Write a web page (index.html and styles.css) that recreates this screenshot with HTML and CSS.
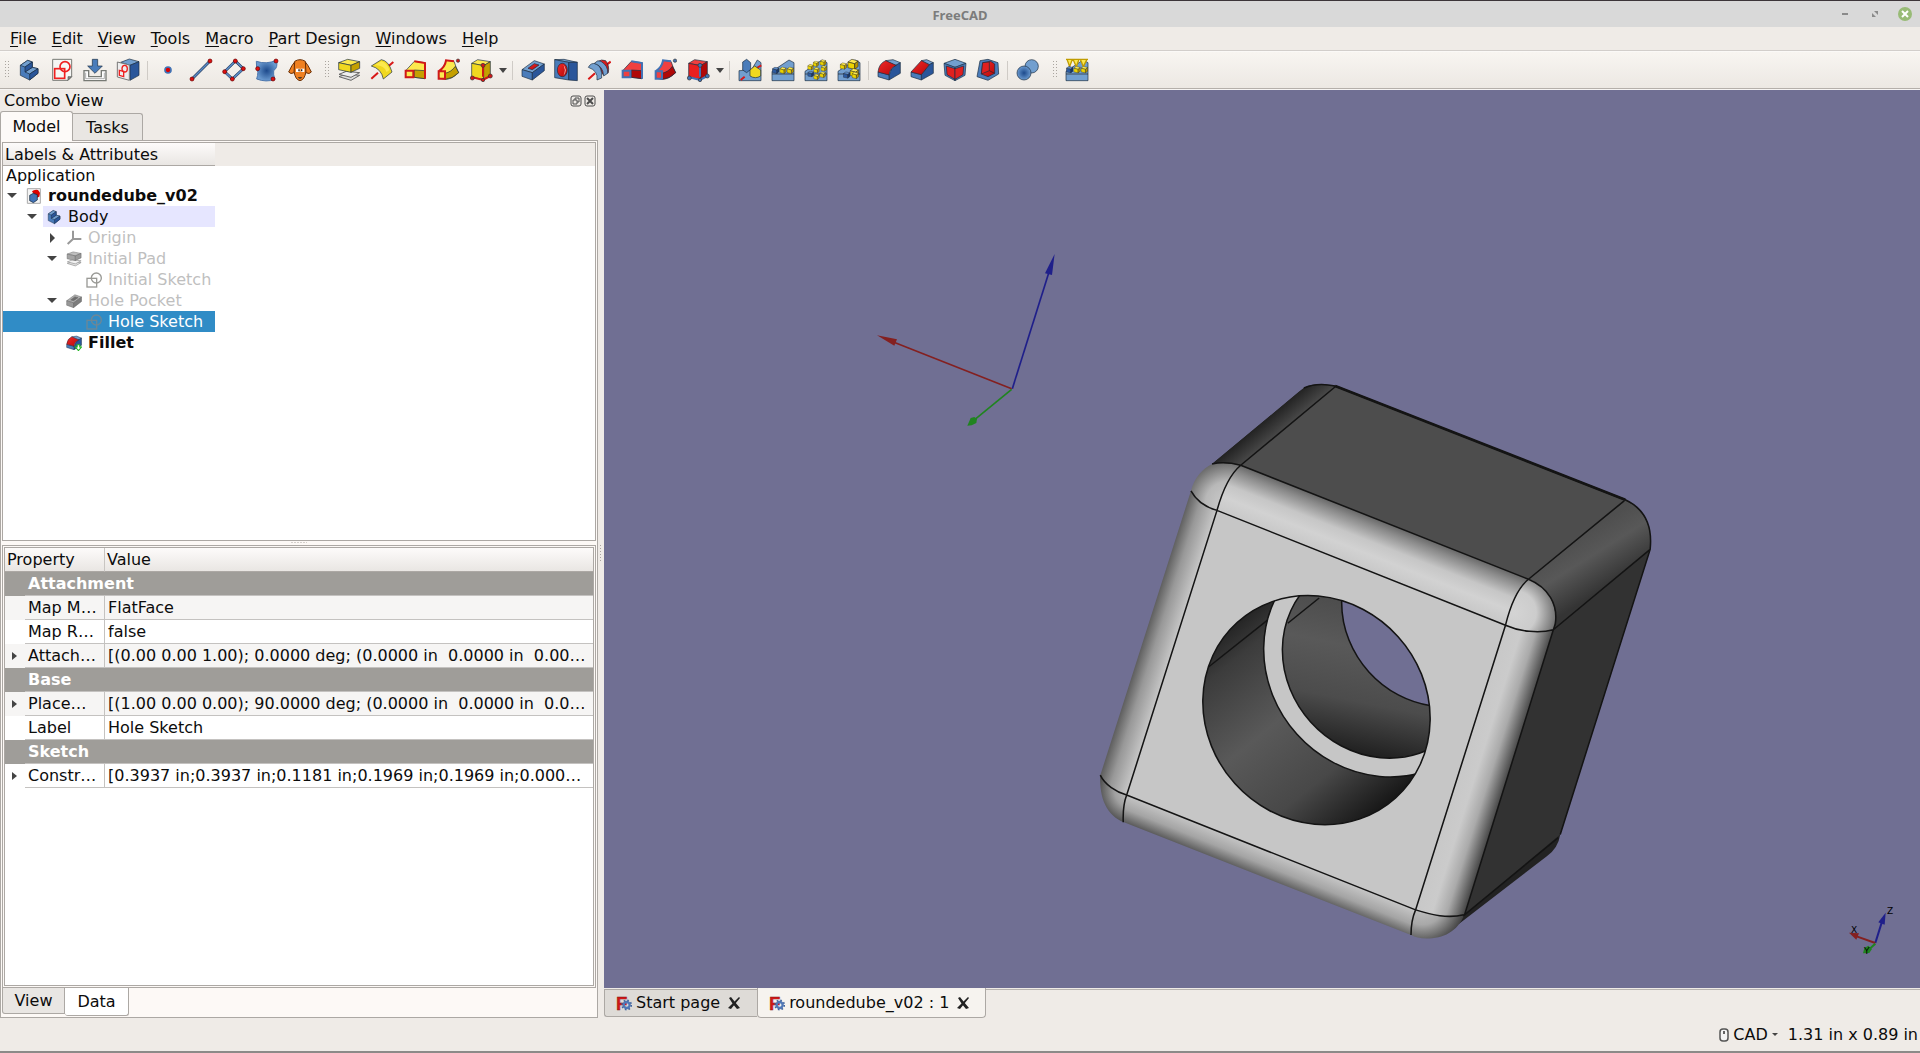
FILE: index.html
```html
<!DOCTYPE html>
<html lang="en">
<head>
<meta charset="utf-8">
<title>FreeCAD</title>
<link rel="stylesheet" href="styles.css">
</head>
<body>
<svg class="defs" aria-hidden="true">
  <defs>
    <linearGradient id="gBlue" x1="0" y1="0" x2="1" y2="1"><stop offset="0" stop-color="#729fcf"/><stop offset="1" stop-color="#204a87"/></linearGradient>
    <radialGradient id="gBall"><stop offset="0" stop-color="#1d4a8c"/><stop offset="1" stop-color="#6a9ad0"/></radialGradient>
    <linearGradient id="gRed" x1="0" y1="0" x2="1" y2="1"><stop offset="0" stop-color="#ef2929"/><stop offset="1" stop-color="#b80808"/></linearGradient>

    <symbol id="cube" viewBox="0 0 20 20">
      <path class="top" d="M1 6 8 1 19 4 13 9Z"/><path class="front" d="M1 6 13 9 13 19 1 16Z"/><path class="side" d="M13 9 19 4 19 14 13 19Z"/>
    </symbol>

    <symbol id="body" viewBox="0 0 72 72"><g class="ink">
      <path class="b2" d="M10 22 32 7 46 12 46 28 63 32 63 46 38 66 10 52Z"/>
      <path class="b1" d="M10 22 32 7 46 12 24 27Z"/><path class="b1" d="M24 42 46 28 63 32 38 48Z"/>
      <path class="b3" d="M38 48 63 32 63 46 38 66Z"/><path class="b3" d="M24 27 46 12 46 28 24 42Z"/></g>
    </symbol>
    <symbol id="sketch" viewBox="0 0 72 72">
      <path d="M8 4H65V56L54 67H8Z" fill="#f6f6f4" stroke="#777a75" stroke-width="3"/><path d="M65 56H54V67Z" fill="#888a85" stroke="#555" stroke-width="2"/>
      <g class="redline"><rect x="14" y="32" width="30" height="29"/><circle cx="45" cy="26" r="15"/></g>
    </symbol>
    <symbol id="import" viewBox="0 0 72 72">
      <path d="M3 38H17V56H55V38H69V68H3Z" fill="#fff" stroke="#777a75" stroke-width="4"/><path d="M8 44V62H64V44" fill="none" stroke="#888" stroke-width="2"/>
      <path class="b2 ink" d="M28 4H44V24H58L36 46 14 24H28Z"/>
    </symbol>
    <symbol id="facesketch" viewBox="0 0 72 72">
      <g class="ink"><path class="b1" d="M14 13 40 3 69 11 42 22Z"/><path class="b3" d="M42 22 69 11 69 52 42 67Z"/></g>
      <path d="M4 12 40 21 40 67 4 57Z" fill="#eee" stroke="#777" stroke-width="3"/>
      <g class="redline thin"><path d="M10 37 23 40 23 56 10 52Z"/><ellipse cx="26" cy="32" rx="8" ry="10"/></g>
    </symbol>
    <symbol id="point" viewBox="0 0 72 72"><circle cx="36" cy="36" r="9" fill="#d00" stroke="#4272b4" stroke-width="5"/></symbol>
    <symbol id="line" viewBox="0 0 72 72"><path class="wire" d="M9 63 63 9"/><path class="wirein" d="M9 63 63 9"/><g class="dot"><circle cx="9" cy="63" r="6"/><circle cx="63" cy="9" r="6"/></g></symbol>
    <symbol id="plane" viewBox="0 0 72 72"><path class="wire" d="M40 9 64 32 31 63 8 41Z"/><path class="wirein" d="M40 9 64 32 31 63 8 41Z"/><g class="dot"><circle cx="40" cy="9" r="6"/><circle cx="64" cy="32" r="6"/><circle cx="31" cy="63" r="6"/><circle cx="8" cy="41" r="6"/></g></symbol>
    <symbol id="binder" viewBox="0 0 72 72"><path d="M4 10Q34 20 64 7Q70 28 56 38Q54 50 60 64Q34 74 5 63Q12 40 5 32Z" fill="url(#gBall)" stroke="#4e77ad" stroke-width="3"/><g class="dot"><circle cx="63" cy="9" r="6"/><circle cx="8" cy="32" r="6"/><circle cx="54" cy="63" r="6"/></g></symbol>
    <symbol id="clone" viewBox="0 0 72 72"><g stroke="#6d3208" stroke-width="3" fill="#f08020"><path d="M20 10Q36 0 52 10Q56 24 54 40Q50 66 36 68Q22 66 18 40Q16 24 20 10Z"/><path d="M20 12Q12 20 2 42Q8 50 18 44Z"/><path d="M52 12Q60 20 70 42Q64 50 54 44Z"/></g><rect x="24" y="32" width="11" height="10" fill="#fff"/><rect x="38" y="32" width="11" height="10" fill="#fff"/><path d="M31 34h4v6h-4zM39 34h4v6h-4zM29 58q7 8 14 0z" fill="#222"/></symbol>

    <symbol id="pad" viewBox="0 0 72 72"><path d="M6 56 28 48 68 52 42 67Z" fill="#ddd" stroke="#666" stroke-width="3"/><path d="M6 49 28 40 68 44 42 58Z" fill="#eee" stroke="#666" stroke-width="3"/><g class="ink"><path class="m1" d="M5 14 32 4 68 11 42 22Z"/><path class="m2" d="M5 14 42 22 42 43 5 35Z"/><path class="m3" d="M42 22 68 11 68 31 42 43Z"/></g></symbol>
    <symbol id="revolution" viewBox="0 0 72 72"><path class="axis" d="M4 62 24 44M56 24 70 12"/><path class="ink m2" d="M4 24 34 5Q56 8 66 42L40 63Q34 32 4 24Z"/><path class="m1" d="M14 22 34 10Q50 14 58 36L50 42Q42 20 14 22Z"/></symbol>
    <symbol id="loft" viewBox="0 0 72 72"><path class="m1 ink" d="M8 38 34 10 66 14 66 62 34 58 8 58Z"/><path class="m3 ink" d="M34 36 66 38 66 62 34 58Z"/><path class="edge" d="M34 10 66 15 66 62"/><path class="edge" d="M8 38H31V58H8Z"/></symbol>
    <symbol id="pipe" viewBox="0 0 72 72"><path class="m1 ink" d="M8 40Q26 28 30 7L54 10Q60 28 68 44Q46 66 24 64L8 60Z"/><path class="m3 ink" d="M27 46Q46 42 58 25L68 44Q50 62 27 64Z"/><path class="edge" d="M8 40H27V62H8ZM8 40Q28 26 30 7L54 10"/><circle class="edot" cx="66" cy="8" r="5"/></symbol>
    <symbol id="prim" viewBox="0 0 72 72"><g class="ink"><path class="m1" d="M8 16 26 5 64 11 44 23Z"/><path class="m2" d="M8 16 44 23 44 64 8 58Z"/><path class="m3" d="M44 23 64 11 64 52 44 64Z"/></g><path class="edge" d="M42 22V56M10 58 42 66 64 54"/><g class="edot"><circle cx="42" cy="22" r="6"/><circle cx="10" cy="60" r="6"/><circle cx="42" cy="66" r="5"/><circle cx="64" cy="54" r="6"/></g></symbol>
    <symbol id="pocket" viewBox="0 0 72 72"><g class="ink"><path class="b1" d="M3 35 40 8 70 18 34 44Z"/><path class="b2" d="M3 35 34 44 34 66 3 55Z"/><path class="b3" d="M34 44 70 18 70 38 34 66Z"/><path class="r1" d="M21 31 40 17 54 21 34 35Z"/></g></symbol>
    <symbol id="hole" viewBox="0 0 72 72"><g class="ink"><path class="b1" d="M2 5 44 13 70 13 30 4Z"/><path class="b2" d="M2 5 44 13 44 66 2 59Z"/><path class="b3" d="M44 13 70 13 70 68 44 66Z"/><ellipse class="r1" cx="25" cy="36" rx="15" ry="20"/></g><path d="M28 20Q42 36 28 54Q38 36 28 20" fill="#fff"/></symbol>
    <symbol id="groove" viewBox="0 0 72 72"><path class="axis" d="M4 64 24 46M56 22 71 11"/><path class="ink r1" d="M30 12Q44 2 56 8Q68 22 64 44L48 50Z"/><path class="ink b1" d="M4 28Q12 12 28 18Q46 26 44 60L30 66Q34 38 4 28Z"/><path class="ink b1" d="M22 16Q32 4 42 10Q64 24 62 46L50 54Q48 24 22 16Z"/></symbol>

    <symbol id="base" viewBox="0 0 72 72"><path class="ink b1" d="M3 40 54 6 69 14 69 68 3 68Z"/><path class="inkline" d="M3 48 69 48"/></symbol>
    <symbol id="mirrored" viewBox="0 0 72 72"><path class="ink b1" d="M3 38 40 36 58 6 69 14V68H3Z"/><path class="axis" d="M8 66 20 56M56 30 70 22"/><path class="ink b2" d="M14 12 26 4 38 14V34L26 44 14 36Z"/><path class="ink m2" d="M36 36 50 24 68 36V54Q52 64 36 54Z"/></symbol>
    <symbol id="linear" viewBox="0 0 72 72"><use href="#base"/><use class="cb" href="#cube" x="3" y="26" width="22" height="22"/><use class="cy" href="#cube" x="25" y="26" width="22" height="22"/><use class="cy" href="#cube" x="47" y="26" width="22" height="22"/></symbol>
    <symbol id="polar" viewBox="0 0 72 72"><use href="#base"/><g class="cy"><use href="#cube" x="26" y="8" width="19" height="19"/><use href="#cube" x="47" y="4" width="20" height="20"/><use href="#cube" x="10" y="18" width="19" height="19"/><use href="#cube" x="50" y="22" width="19" height="19"/><use href="#cube" x="28" y="27" width="19" height="19"/><use href="#cube" x="46" y="40" width="20" height="20"/><use href="#cube" x="28" y="47" width="19" height="19"/></g><use class="cb" href="#cube" x="10" y="38" width="20" height="20"/></symbol>
    <symbol id="multi" viewBox="0 0 72 72"><use href="#base"/><g class="cy"><use href="#cube" x="30" y="2" width="36" height="34"/><use href="#cube" x="8" y="13" width="22" height="22"/><use href="#cube" x="36" y="30" width="32" height="28"/><use href="#cube" x="44" y="40" width="22" height="24"/></g><use class="cb" href="#cube" x="18" y="40" width="22" height="22"/></symbol>
    <symbol id="fillet" viewBox="0 0 72 72"><g class="ink"><path class="b1" d="M26 8 48 5 70 14 58 24Z"/><path class="b3" d="M36 62Q36 38 52 24L70 14V46L36 66Z"/><path class="b2" d="M3 42 36 50V66L3 56Z"/><path class="r1" d="M3 42Q6 16 26 8L58 22Q38 30 36 51Z"/></g></symbol>
    <symbol id="chamfer" viewBox="0 0 72 72"><g class="ink"><path class="b1" d="M34 8 50 5 70 14 58 20Z"/><path class="b3" d="M34 50 58 20 70 14V46L34 66Z"/><path class="b2" d="M3 42 34 50V66L3 56Z"/><path class="r1" d="M3 42 34 8 58 20 34 50Z"/></g></symbol>
    <symbol id="draft" viewBox="0 0 72 72"><g class="ink"><path class="b1" d="M3 16 36 4 69 16 36 28Z"/><path class="b2" d="M3 16 36 28V68L6 52Z"/><path class="b2" d="M69 16 36 28V68L66 52Z"/><path class="r2" d="M10 24 36 32V64L12 50Z"/><path class="r2" d="M62 24 36 32V64L60 50Z"/></g></symbol>
    <symbol id="thick" viewBox="0 0 72 72"><g class="ink"><path class="b2" d="M12 8 36 4 66 14 68 48 36 67 3 56Z"/><path class="r1" d="M20 14 44 10 56 18V46L36 56 16 48Z"/><path class="r2" d="M20 14 40 12V38L16 48Z"/></g><path class="inkline" d="M40 38 56 46"/></symbol>
    <symbol id="boolean" viewBox="0 0 72 72"><circle class="ink b1" cx="47" cy="25" r="20"/><circle class="ink" cx="24" cy="45" r="21" fill="url(#gBall)"/></symbol>
    <symbol id="shaft" viewBox="0 0 72 72"><use href="#base"/><path d="M3 4H69M6 4 14 26 22 4M24 4 34 26 42 4M46 4 55 26 66 4" fill="#fce94f" stroke="#c09c00" stroke-width="4"/><use class="cb" href="#cube" x="3" y="24" width="22" height="22"/><use class="cy" href="#cube" x="25" y="24" width="22" height="22"/><use class="cy" href="#cube" x="47" y="24" width="22" height="22"/></symbol>

    <symbol id="doc" viewBox="0 0 48 48"><path d="M4 2H43V46H4Z" fill="#f4f4f4" stroke="#aaa" stroke-width="3"/><path d="M18 10Q24 4 36 6L42 14 40 26 30 30Z" fill="#d00"/><path d="M11 22 22 16 34 20V36L22 44 11 38Z" fill="#4272b4" stroke="#123" stroke-width="2"/></symbol>
    <symbol id="origin" viewBox="0 0 48 48"><path d="M21 2V27L46 27M21 27 5 42" fill="none" stroke="#999" stroke-width="6"/></symbol>
    <symbol id="sketchgrey" viewBox="0 0 48 48"><g fill="none" stroke="currentColor" stroke-width="4"><rect x="3" y="19" width="29" height="26"/><circle cx="31" cy="18" r="15"/></g></symbol>
    <symbol id="filletdown" viewBox="0 0 72 72"><use href="#fillet"/><path d="M50 44H62V54H70L56 70 42 54H50Z" fill="#fff" stroke="#1fb51f" stroke-width="5"/></symbol>
    <symbol id="app" viewBox="0 0 48 48"><text x="0" y="45" class="logo-letter">F</text><g><circle cx="32" cy="30" r="9" fill="none" stroke="#5078b8" stroke-width="7"/><circle cx="32" cy="30" r="14" fill="none" stroke="#41659e" stroke-width="5" stroke-dasharray="5 6"/></g></symbol>
    <symbol id="closex" viewBox="0 0 12 12"><path d="M1 1 3 0Q6 4 12 11L9 12Q5 8 1 1Z"/><path d="M11 0 7 4Q4 7 0 11L3 12Q7 7 12 1Z"/></symbol>
  </defs>
</svg>

<header class="titlebar">
  <h1>FreeCAD</h1>
  <div class="winctl">
    <button aria-label="Minimize"><svg viewBox="0 0 16 16"><path d="M5 8H11" stroke="#8a8a8a" stroke-width="2"/></svg></button>
    <button aria-label="Restore"><svg viewBox="0 0 16 16"><path d="M7 5H11V9ZM5 7 9 11H5Z" fill="#8a8a8a"/></svg></button>
    <button aria-label="Close"><svg viewBox="0 0 16 16"><circle cx="8" cy="8" r="7" fill="#98bb76"/><path d="M5 5 11 11M11 5 5 11" stroke="#fff" stroke-width="2"/></svg></button>
  </div>
</header>

<nav class="menubar" aria-label="Menu">
  <button><u>F</u>ile</button><button><u>E</u>dit</button><button><u>V</u>iew</button><button><u>T</u>ools</button><button><u>M</u>acro</button><button><u>P</u>art Design</button><button><u>W</u>indows</button><button><u>H</u>elp</button>
</nav>

<div class="toolbar" role="toolbar" aria-label="Part Design tools">
  <span class="grip first"></span>
  <button aria-label="Create body"><svg><use href="#body"/></svg></button>
  <button aria-label="Create sketch"><svg><use href="#sketch"/></svg></button>
  <button aria-label="Edit sketch"><svg><use href="#import"/></svg></button>
  <button aria-label="Map sketch to face"><svg><use href="#facesketch"/></svg></button>
  <span class="sep"></span>
  <button aria-label="Datum point"><svg><use href="#point"/></svg></button>
  <button aria-label="Datum line"><svg><use href="#line"/></svg></button>
  <button aria-label="Datum plane"><svg><use href="#plane"/></svg></button>
  <button aria-label="Shape binder"><svg><use href="#binder"/></svg></button>
  <button aria-label="Clone"><svg><use href="#clone"/></svg></button>
  <span class="grip"></span>
  <button class="add" aria-label="Pad"><svg><use href="#pad"/></svg></button>
  <button class="add" aria-label="Revolution"><svg><use href="#revolution"/></svg></button>
  <button class="add" aria-label="Additive loft"><svg><use href="#loft"/></svg></button>
  <button class="add" aria-label="Additive pipe"><svg><use href="#pipe"/></svg></button>
  <button class="add" aria-label="Additive primitive"><svg><use href="#prim"/></svg></button>
  <button class="more" aria-label="More additive primitives"></button>
  <span class="sep"></span>
  <button aria-label="Pocket"><svg><use href="#pocket"/></svg></button>
  <button aria-label="Hole"><svg><use href="#hole"/></svg></button>
  <button aria-label="Groove"><svg><use href="#groove"/></svg></button>
  <button class="sub" aria-label="Subtractive loft"><svg><use href="#loft"/></svg></button>
  <button class="sub" aria-label="Subtractive pipe"><svg><use href="#pipe"/></svg></button>
  <button class="sub" aria-label="Subtractive primitive"><svg><use href="#prim"/></svg></button>
  <button class="more" aria-label="More subtractive primitives"></button>
  <span class="sep"></span>
  <button class="add" aria-label="Mirrored"><svg><use href="#mirrored"/></svg></button>
  <button aria-label="Linear pattern"><svg><use href="#linear"/></svg></button>
  <button aria-label="Polar pattern"><svg><use href="#polar"/></svg></button>
  <button aria-label="Multi transform"><svg><use href="#multi"/></svg></button>
  <span class="sep"></span>
  <button aria-label="Fillet"><svg><use href="#fillet"/></svg></button>
  <button aria-label="Chamfer"><svg><use href="#chamfer"/></svg></button>
  <button aria-label="Draft"><svg><use href="#draft"/></svg></button>
  <button aria-label="Thickness"><svg><use href="#thick"/></svg></button>
  <span class="sep"></span>
  <button aria-label="Boolean"><svg><use href="#boolean"/></svg></button>
  <span class="grip"></span>
  <button aria-label="Shaft wizard"><svg><use href="#shaft"/></svg></button>
</div>

<main class="workspace">
  <aside class="dock">
    <div class="dock-title">
      <h2>Combo View</h2>
      <button aria-label="Float"><svg viewBox="0 0 12 12"><rect x="1" y="1" width="10" height="10" rx="2"/><path d="M5 5V3H9V7H7M3 5H7V9H3Z"/></svg></button>
      <button aria-label="Close panel"><svg viewBox="0 0 12 12"><rect x="1" y="1" width="10" height="10" rx="2"/><path d="M3 3 9 9M9 3 3 9" stroke-width="2"/></svg></button>
    </div>
    <div class="tabs top-tabs" role="tablist">
      <button class="tab active" role="tab" aria-selected="true">Model</button><button class="tab" role="tab" aria-selected="false">Tasks</button>
    </div>
    <div class="dock-body">
      <section class="tree">
        <div class="tree-head"><span>Labels &amp; Attributes</span></div>
        <p class="app-row">Application</p>
        <ul class="nodes" role="tree">
          <li class="l0" role="treeitem"><i class="down"></i><span class="cell"><svg><use href="#doc"/></svg><b>roundedube_v02</b></span></li>
          <li class="l1" role="treeitem"><i class="down"></i><span class="cell lit"><svg><use href="#body"/></svg>Body</span></li>
          <li class="l2 off" role="treeitem"><i class="right"></i><span class="cell"><svg><use href="#origin"/></svg>Origin</span></li>
          <li class="l2 off" role="treeitem"><i class="down"></i><span class="cell"><svg class="grey"><use href="#pad"/></svg>Initial Pad</span></li>
          <li class="l3 off" role="treeitem"><i></i><span class="cell"><svg class="sk"><use href="#sketchgrey"/></svg>Initial Sketch</span></li>
          <li class="l2 off" role="treeitem"><i class="down"></i><span class="cell"><svg class="grey"><use href="#pocket"/></svg>Hole Pocket</span></li>
          <li class="l3 selected" role="treeitem" aria-selected="true"><i></i><span class="cell"><svg class="sk"><use href="#sketchgrey"/></svg>Hole Sketch</span></li>
          <li class="l2" role="treeitem"><i></i><span class="cell"><svg><use href="#filletdown"/></svg><b>Fillet</b></span></li>
        </ul>
      </section>
      <div class="hsplit"></div>
      <section class="props">
        <div class="props-inner">
          <table>
            <colgroup><col class="c-gutter"><col class="c-name"><col></colgroup>
            <thead><tr><th colspan="2" class="h-name">Property</th><th>Value</th></tr></thead>
            <tbody>
              <tr class="group"><td></td><th colspan="2">Attachment</th></tr>
              <tr class="alt"><td></td><td class="name">Map M…</td><td>FlatFace</td></tr>
              <tr><td></td><td class="name">Map R…</td><td>false</td></tr>
              <tr class="alt"><td><i class="right"></i></td><td class="name">Attach…</td><td>[(0.00 0.00 1.00); 0.0000 deg; (0.0000 in  0.0000 in  0.00…</td></tr>
              <tr class="group"><td></td><th colspan="2">Base</th></tr>
              <tr class="alt"><td><i class="right"></i></td><td class="name">Place…</td><td>[(1.00 0.00 0.00); 90.0000 deg; (0.0000 in  0.0000 in  0.0…</td></tr>
              <tr><td></td><td class="name">Label</td><td>Hole Sketch</td></tr>
              <tr class="group"><td></td><th colspan="2">Sketch</th></tr>
              <tr><td><i class="right"></i></td><td class="name">Constr…</td><td>[0.3937 in;0.3937 in;0.1181 in;0.1969 in;0.1969 in;0.000…</td></tr>
            </tbody>
          </table>
        </div>
      </section>
      <div class="tabs bottom-tabs" role="tablist">
        <button class="tab" role="tab" aria-selected="false">View</button><button class="tab active" role="tab" aria-selected="true">Data</button>
      </div>
    </div>
  </aside>
  <div class="vsplit"></div>
  <section class="mdi">
    <div class="scene">
      <svg viewBox="0 0 1316 898" role="img" aria-label="Rounded cube with counterbored hole">
        <defs>
          <linearGradient id="fTop" gradientUnits="userSpaceOnUse" x1="796" y1="424" x2="747" y2="548"><stop offset="0" stop-color="#686868"/><stop offset=".15" stop-color="#8a8a8a"/><stop offset=".45" stop-color="#c6c6c6"/><stop offset=".7" stop-color="#d2d2d2"/><stop offset="1" stop-color="#c8c8c8"/></linearGradient>
          <linearGradient id="fLeft" gradientUnits="userSpaceOnUse" x1="172" y1="714" x2="248" y2="738"><stop offset="0" stop-color="#606060"/><stop offset=".4" stop-color="#989898"/><stop offset="1" stop-color="#c6c6c6"/></linearGradient>
          <linearGradient id="fRight" gradientUnits="userSpaceOnUse" x1="995" y1="1065" x2="1112" y2="1102"><stop offset="0" stop-color="#c8c8c8"/><stop offset=".35" stop-color="#cbcbcb"/><stop offset=".65" stop-color="#aaa"/><stop offset="1" stop-color="#4a4a4a"/></linearGradient>
          <linearGradient id="fBottom" gradientUnits="userSpaceOnUse" x1="500" y1="1288" x2="473" y2="1355"><stop offset="0" stop-color="#c4c4c4"/><stop offset=".5" stop-color="#a4a4a4"/><stop offset="1" stop-color="#555"/></linearGradient>
          <linearGradient id="fBackL" gradientUnits="userSpaceOnUse" x1="448" y1="178" x2="500" y2="240"><stop offset="0" stop-color="#1e1e1e"/><stop offset=".7" stop-color="#484848"/><stop offset="1" stop-color="#4c4c4c"/></linearGradient>
          <linearGradient id="fBackR" gradientUnits="userSpaceOnUse" x1="1290" y1="470" x2="1370" y2="598"><stop offset="0" stop-color="#4f4f4f"/><stop offset=".4" stop-color="#585858"/><stop offset="1" stop-color="#343434"/></linearGradient>
          <radialGradient id="cTL" gradientUnits="userSpaceOnUse" cx="385" cy="375" r="115"><stop offset="0" stop-color="#ccc"/><stop offset=".5" stop-color="#b8b8b8"/><stop offset="1" stop-color="#606060"/></radialGradient>
          <radialGradient id="cTR" gradientUnits="userSpaceOnUse" cx="1135" cy="660" r="115"><stop offset="0" stop-color="#d4d4d4"/><stop offset=".5" stop-color="#ccc"/><stop offset="1" stop-color="#666"/></radialGradient>
          <radialGradient id="cBR" gradientUnits="userSpaceOnUse" cx="895" cy="1420" r="112"><stop offset="0" stop-color="#c8c8c8"/><stop offset=".5" stop-color="#a8a8a8"/><stop offset="1" stop-color="#404040"/></radialGradient>
          <radialGradient id="cBL" gradientUnits="userSpaceOnUse" cx="135" cy="1125" r="90"><stop offset="0" stop-color="#c6c6c6"/><stop offset=".5" stop-color="#a0a0a0"/><stop offset="1" stop-color="#484848"/></radialGradient>
          <linearGradient id="bore" gradientUnits="userSpaceOnUse" x1="405" y1="670" x2="800" y2="1160"><stop offset="0" stop-color="#202020"/><stop offset=".14" stop-color="#3c3c3c"/><stop offset=".45" stop-color="#595959"/><stop offset=".75" stop-color="#484848"/><stop offset="1" stop-color="#181818"/></linearGradient>
          <linearGradient id="bore2" gradientUnits="userSpaceOnUse" x1="535" y1="600" x2="870" y2="1045"><stop offset="0" stop-color="#242424"/><stop offset=".14" stop-color="#444"/><stop offset=".5" stop-color="#595959"/><stop offset=".75" stop-color="#4c4c4c"/><stop offset="1" stop-color="#1e1e1e"/></linearGradient>
          <clipPath id="rim"><ellipse cx="618" cy="915" rx="309" ry="287" transform="rotate(48 618 915)"/></clipPath>
        </defs>
        <g transform="translate(476 270) scale(.38265)">
          <path d="M585 73Q620 58 667 68L1425 365Q1500 400 1490 495L1255 1240Q1250 1275 1220 1297L990 1474 1005 1300 345 272 570 85Z" fill="#222"/>
          <path d="M667 70 1425 368 1172 573 420 275Z" fill="#4d4d4d"/>
          <path d="M585 73C610 58 640 62 667 70L420 275C395 268 370 268 345 272L570 85Z" fill="url(#fBackL)"/>
          <path d="M1490 495 1255 1240 1005 1450 1237 705Z" fill="#323232"/>
          <path d="M1172 573 1425 368C1465 385 1500 430 1490 495L1237 705C1250 640 1225 595 1172 573Z" fill="url(#fBackR)"/>
          <path d="M358 393 1112 693 877 1437 122 1137Z" fill="#c6c6c6"/>
          <path d="M420 275 1172 573C1145 595 1125 640 1112 693L358 393C370 350 390 300 420 275Z" fill="url(#fTop)"/>
          <path d="M290 342C305 370 330 385 358 393L122 1137C95 1130 65 1110 53 1085Z" fill="url(#fLeft)"/>
          <path d="M1112 693C1150 710 1200 715 1237 705L1005 1450C960 1460 920 1450 877 1437Z" fill="url(#fRight)"/>
          <path d="M122 1137 877 1437C867 1460 865 1480 865 1503L115 1208C112 1180 115 1160 122 1137Z" fill="url(#fBottom)"/>
          <path d="M290 342C300 305 320 285 345 272C370 266 400 270 420 275C390 300 370 350 358 393C330 385 305 370 290 342Z" fill="url(#cTL)"/>
          <path d="M1172 573C1225 590 1255 650 1237 705C1200 715 1150 710 1112 693C1125 640 1145 595 1172 573Z" fill="url(#cTR)"/>
          <path d="M877 1437C920 1450 960 1460 1005 1450C985 1495 950 1512 905 1512Q880 1512 865 1503C865 1480 867 1460 877 1437Z" fill="url(#cBR)"/>
          <path d="M53 1085C65 1110 95 1130 122 1137C115 1160 112 1180 115 1208C70 1190 50 1145 53 1085Z" fill="url(#cBL)"/>
          <g clip-path="url(#rim)">
            <path d="M300 600H940V1240H300Z" fill="url(#bore)"/>
            <path class="solid" d="M335 803 490 680"/>
            <ellipse class="solid" cx="787" cy="780" rx="320" ry="296" transform="rotate(48 787 780)" fill="#c6c6c6"/>
            <ellipse class="solid" cx="787" cy="780" rx="270" ry="248" transform="rotate(48 787 780)" fill="url(#bore2)"/>
            <path class="solid" d="M543 688 625 622"/>
            <ellipse class="solid" cx="934" cy="654" rx="261" ry="241" transform="rotate(48 934 654)" fill="#706f93"/>
          </g>
          <g class="solid" fill="none">
            <ellipse cx="618" cy="915" rx="309" ry="287" transform="rotate(48 618 915)"/>
            <path d="M667 70 420 275M345 272C370 266 400 270 420 275L1172 573C1225 595 1250 640 1242 690L1237 705C1200 715 1150 710 1112 693L358 393C330 385 305 370 290 342M420 275C390 300 370 350 358 393L122 1137C113 1160 112 1180 113 1208M53 1085C65 1110 95 1130 122 1137L877 1437C920 1450 960 1460 1003 1450M1172 573C1145 595 1125 640 1112 693L877 1437C867 1460 865 1480 865 1503M1172 573 1422 368M1237 705 1490 495M1237 705 1005 1450 1250 1248M585 73Q620 58 667 68L1425 365Q1500 400 1490 495L1255 1240"/>
            <path d="M667 68 1425 365" stroke-width="7"/>
          </g>
        </g>
        <g transform="translate(256 150) scale(.3333)" stroke-width="5">
          <path d="M457 446 569 90" stroke="#1f1f8a"/><path d="M584 42 576 105 555 100Z" fill="#1f1f8a"/>
          <path d="M455 446 100 306" stroke="#842020"/><path d="M51 286 111 298 103 317Z" fill="#842020"/>
          <path d="M455 448 345 538" stroke="#208420"/><path d="M322 557 332 534 343 531 351 537 349 549 335 556Z" fill="#208420"/>
        </g>
        <g transform="translate(1076 800) scale(.3333)" stroke-width="6">
          <path d="M586 159 606 95" stroke="#1f1f8a"/><path d="M617 68 614 104 595 97Z" fill="#1f1f8a"/>
          <path d="M586 159 530 139" stroke="#842020"/><path d="M507 128 537 130 529 149Z" fill="#842020"/>
          <path d="M586 161 565 180" stroke="#208420"/><path d="M549 190 553 174 565 167 576 177 568 189Z" fill="#208420"/>
        </g>
        <g class="axis-labels"><text x="1247" y="843">X</text><text x="1260" y="864">Y</text><text x="1283" y="824">Z</text></g>
      </svg>
    </div>
    <div class="doc-tabs" role="tablist">
      <div class="doc-tab"><button class="doc-name" role="tab" aria-selected="false"><svg><use href="#app"/></svg>Start page</button><button class="doc-close" aria-label="Close Start page"><svg><use href="#closex"/></svg></button></div>
      <div class="doc-tab active"><button class="doc-name" role="tab" aria-selected="true"><svg><use href="#app"/></svg>roundedube_v02 : 1</button><button class="doc-close" aria-label="Close roundedube_v02"><svg><use href="#closex"/></svg></button></div>
      <div class="rest"></div>
    </div>
  </section>
</main>

<footer class="status">
  <button class="navstyle"><svg viewBox="0 0 10 14"><rect x="1" y="1" width="8" height="12" rx="3" fill="#f4f4f4" stroke="#555" stroke-width="1.5"/><path d="M5 3V6" stroke="#333" stroke-width="1.5"/></svg>CAD<i class="down small"></i></button>
  <span>1.31 in x 0.89 in</span>
</footer>
</body>
</html>
```
FILE: styles.css
```css
* { box-sizing: border-box; }

body {
  margin: 0;
  min-height: 100vh;
  display: flex;
  flex-direction: column;
  background: #efebe7;
  color: #0c0c0c;
  font: 16px/20px "DejaVu Sans", sans-serif;
  border-top: 1px solid #3c3539;
}

button {
  margin: 0;
  padding: 0;
  border: 0;
  background: none;
  font: inherit;
  color: inherit;
}

h1, h2, p, ul { margin: 0; padding: 0; }
svg { display: block; }
.defs { position: absolute; width: 0; height: 0; }

/* title bar */
.titlebar {
  display: grid;
  grid-template-columns: 1fr auto 1fr;
  align-items: center;
  height: 26px;
  background: #d9d9d9;
}
.titlebar h1 {
  grid-column: 2;
  padding-top: 2px;
  font: bold 13px/20px "Noto Sans", sans-serif;
  color: #7c7c7c;
}
.winctl { display: flex; justify-content: flex-end; gap: 14px; padding-right: 7px; }
.winctl svg { width: 16px; height: 16px; }

/* menu bar */
.menubar { display: flex; gap: 1px; height: 24px; padding: 0 3px; border-bottom: 1px solid #d2cecb; }
.menubar button { padding: 0 7px; }
.menubar u { text-underline-offset: 2px; text-decoration-thickness: 1px; }

/* toolbar */
.toolbar {
  display: flex;
  align-items: center;
  height: 38px;
  background: linear-gradient(#f8f5f1, #ece8e3);
  border-top: 1px solid #fbf9f7;
  border-bottom: 1px solid #b4afaa;
}
.toolbar button { flex: none; width: 33px; height: 33px; display: grid; place-items: center; }
.toolbar svg { width: 24px; height: 24px; }
.toolbar .more { width: 12px; }
.grip, .hsplit, .vsplit { --dots: conic-gradient(at 1px 1px, transparent 75%, #aaa59f 0); }
.grip {
  width: 4px;
  height: 18px;
  margin: 0 3px 0 9px;
  background: var(--dots) 0 0 / 3px 3px;
}
.grip.first { margin: 0 3px 0 5px; }
.sep { width: 7px; height: 19px; background: linear-gradient(#cfcbc6, #cfcbc6) 3px 0 / 1px 100% no-repeat; }
.more::after, .down::after, .right::after {
  content: "";
  display: block;
  border: 4px solid transparent;
}
.more::after, .down::after { border-top: 5px solid #444; border-bottom: 0; }
.right::after { border-left: 5px solid #444; border-right: 0; }

/* icon paints */
.ink, .ink path, .ink ellipse { stroke: #1a2c40; stroke-width: 2; stroke-linejoin: round; }
.inkline { fill: none; stroke: #222; stroke-width: 2; }
.b1 { fill: #729fcf; }
.b2 { fill: #4a7cba; }
.b3 { fill: #2a569a; }
.r1 { fill: url(#gRed); }
.r2 { fill: #e02020; }
.m1 { fill: var(--m1, #fce94f); }
.m2 { fill: var(--m2, #f0d820); }
.m3 { fill: var(--m3, #c4a000); }
.edge { fill: none; stroke: var(--edge, #d01818); stroke-width: 6; }
.edot { fill: var(--edge, #d01818); stroke: #333; stroke-width: 2; }
.sub { --m1: #f04040; --m2: #e82020; --m3: #b00808; --edge: #4272b4; }
.axis { fill: none; stroke: #d81818; stroke-width: 6; }
.redline { fill: none; stroke: #ef2020; stroke-width: 5; }
.redline.thin { stroke-width: 4; }
.wire { fill: none; stroke: #1c3354; stroke-width: 8; }
.wirein { fill: none; stroke: #5c8cc6; stroke-width: 5; }
.dot { fill: #dd1010; stroke: #600; stroke-width: 2; }
.top, .front, .side { stroke: #222; stroke-width: 1; stroke-linejoin: round; }
.cy { --ct: #fce94f; --cf: #edd400; --cs: #b89600; }
.cb { --ct: #5a8ac6; --cf: #2c5ba0; --cs: #173a70; }
.top { fill: var(--ct); }
.front { fill: var(--cf); }
.side { fill: var(--cs); }
.logo-letter { font: bold 56px "Liberation Sans", sans-serif; fill: #d01818; stroke: #801010; stroke-width: 1; }

/* workspace */
.workspace { flex: 1; display: flex; min-height: 600px; border-top: 1px solid #f6f4f2; }
.dock { flex: 0 0 598px; display: flex; flex-direction: column; }
.dock-title { display: flex; align-items: center; gap: 2px; height: 21px; padding: 0 2px 0 4px; }
.dock-title h2 { flex: 1; font: inherit; }
.dock-title svg { width: 12px; height: 12px; fill: none; stroke: #4c4c4c; stroke-width: 1; }
.tabs { display: flex; }
.tab { border: 1px solid #aca8a4; background: #e9e6e3; }
.top-tabs { height: 29px; align-items: flex-end; }
.top-tabs .tab { width: 70px; height: 27px; padding-top: 1px; border-left: 0; border-bottom: 0; border-radius: 0 3px 0 0; }
.top-tabs .active { position: relative; width: 73px; height: 30px; margin-bottom: -1px; padding-top: 0; border-left: 1px solid #aca8a4; border-radius: 3px 3px 0 0; background: #fdfaf8; }

.dock-body {
  flex: 1;
  display: flex;
  flex-direction: column;
  padding: 1px;
  border: 1px solid #aca8a4;
  background: #fdf9f6;
}

.tree { flex: 400 1 0; min-height: 0; border: 1px solid #aca8a4; background: #fff; }
.tree-head { height: 23px; background: #efebe7; }
.tree-head span { display: block; width: 212px; height: 23px; padding: 2px 2px 0; border-bottom: 1px solid #aca8a4; background: linear-gradient(#fdfbfa, #e9e6e3); }
.app-row { height: 19px; padding-left: 3px; line-height: 19px; }
.nodes { width: 212px; list-style: none; }
.nodes li { display: flex; height: 21px; }
.l1 { padding-left: 20px; }
.l2 { padding-left: 40px; }
.l3 { padding-left: 60px; }
.nodes i { width: 20px; padding-right: 2px; display: grid; place-items: center; }
.nodes .down::after { border-width: 5px 5px 0; }
.nodes .right::after { border-width: 5px 0 5px 5px; }
.cell { flex: 1; display: flex; align-items: center; gap: 6px; padding-left: 3px; white-space: nowrap; }
.cell svg { width: 16px; height: 16px; flex: none; }
.lit { background: #e6e6ff; }
.off { color: #bfbfbf; }
.sk { color: #9a9a96; }
.grey { filter: grayscale(1); opacity: .75; --m1: #aaa; --m2: #888; --m3: #777; }
.selected { background: #308cc6; color: #fff; }
.selected .sk { color: #6d8796; }

.hsplit { height: 4px; background: var(--dots) center / 3px 3px; margin: 1px auto 0; width: 16px; height: 3px; }

.props { flex: 442 1 0; min-height: 0; display: flex; padding: 1px; border: 1px solid #aca8a4; }
.props-inner { flex: 1; min-width: 0; border: 1px solid #aca8a4; background: #fff; }
table { width: 100%; table-layout: fixed; border-collapse: separate; border-spacing: 0; }
.c-gutter { width: 20px; }
.c-name { width: 80px; }
th, td { height: 24px; padding: 0; text-align: left; font-weight: normal; white-space: pre; overflow: hidden; }
thead th { padding-left: 2px; border-bottom: 1px solid #aca8a4; background: linear-gradient(#fdfbfa, #e9e6e3); }
.h-name { border-right: 1px solid #c8c5c2; }
tbody td { border-bottom: 1px solid #c4c2c0; padding-left: 3px; }
tbody td:first-child { border-bottom: 0; padding: 0; }
td.name { border-right: 1px solid #c4c2c0; }
td i { display: grid; place-items: center; padding-right: 2px; }
.alt { background: #f6f5f4; }
.group { background: #9f9d99; color: #fff; }
.group th { padding-left: 3px; border-bottom: 1px solid #c4c2c0; font-weight: bold; }

.bottom-tabs { height: 28px; align-items: flex-start; }
.bottom-tabs .tab { width: 63px; height: 26px; border-top: 0; border-radius: 0 0 0 3px; }
.bottom-tabs .active { width: 64px; height: 28px; border-left: 0; border-radius: 0 0 3px 3px; background: #fff; }

.vsplit { align-self: center; width: 4px; height: 18px; margin: 0 0 0 2px; background: var(--dots) 0 0 / 4px 3px; }

/* 3D view and document tabs */
.mdi { flex: 1; min-width: 0; display: flex; flex-direction: column; }
.scene { flex: 1; min-height: 0; background: #706f93; display: grid; }
.scene svg { width: 100%; height: 100%; }
.solid { stroke: #141414; stroke-width: 4; }
.axis-labels { font: 9px "DejaVu Sans", sans-serif; fill: #000; }
.doc-tabs { display: flex; height: 30px; align-items: flex-start; }
.doc-tab {
  display: flex;
  align-items: center;
  gap: 8px;
  height: 28px;
  margin-top: 1px;
  padding: 0 17px 0 11px;
  border: 1px solid #aca8a4;
  border-right: 0;
  border-radius: 0 0 0 3px;
  background: #dedbd7;
}
.doc-tab.active { height: 30px; margin-top: 0; padding-right: 16px; border: 1px solid #aca8a4; border-top: 0; border-radius: 0 0 4px 4px; background: #f6f3ef; }
.doc-name { display: flex; align-items: center; gap: 4px; white-space: nowrap; }
.doc-name svg { width: 16px; height: 16px; }
.doc-close svg { width: 12px; height: 12px; fill: #222; }
.rest { flex: 1; margin-top: 1px; border-top: 1px solid #b8b4b0; }

/* status bar */
.status {
  display: flex;
  justify-content: flex-end;
  align-items: center;
  gap: 10px;
  height: 35px;
  padding: 0 2px 0 0;
  border-bottom: 2px solid #8c8a88;
}
.navstyle { display: flex; align-items: center; gap: 4px; }
.navstyle svg { width: 10px; height: 14px; }
.small::after { border-width: 3px 3px 0; }
```
